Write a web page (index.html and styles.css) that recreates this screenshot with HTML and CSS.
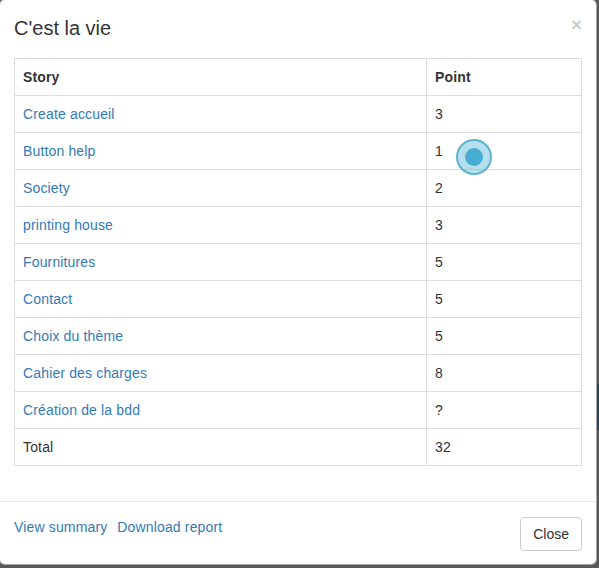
FILE: index.html
```html
<!DOCTYPE html>
<html lang="fr">
<head>
<meta charset="utf-8">
<title>C'est la vie</title>
<link rel="stylesheet" href="styles.css">
</head>
<body>
<div class="backdrop">
  <div class="band"></div>
</div>
<div class="modal">
  <div class="modal-header">
    <h4 class="modal-title">C'est la vie</h4>
    <button class="close" type="button" aria-label="Close">&times;</button>
  </div>
  <div class="modal-body">
    <table class="table">
      <thead>
        <tr><th class="col-story">Story</th><th class="col-point">Point</th></tr>
      </thead>
      <tbody>
        <tr><td><a href="#">Create accueil</a></td><td>3</td></tr>
        <tr><td><a href="#">Button help</a></td><td>1</td></tr>
        <tr><td><a href="#">Society</a></td><td>2</td></tr>
        <tr><td><a href="#">printing house</a></td><td>3</td></tr>
        <tr><td><a href="#">Fournitures</a></td><td>5</td></tr>
        <tr><td><a href="#">Contact</a></td><td>5</td></tr>
        <tr><td><a href="#">Choix du thème</a></td><td>5</td></tr>
        <tr><td><a href="#">Cahier des charges</a></td><td>8</td></tr>
        <tr><td><a href="#">Création de la bdd</a></td><td>?</td></tr>
        <tr><td>Total</td><td>32</td></tr>
      </tbody>
    </table>
  </div>
  <div class="modal-footer">
    <div class="links">
      <a href="#">View summary</a>
      <a href="#">Download report</a>
    </div>
    <button class="btn" type="button">Close</button>
  </div>
  <div class="click-marker"><span class="dot"></span></div>
</div>
</body>
</html>
```

FILE: styles.css
```css
html, body {
  margin: 0;
  padding: 0;
}

body {
  background: #5e5e5e;
  font-family: "Liberation Sans", Arial, Helvetica, sans-serif;
  font-size: 14px;
  line-height: 20px;
  color: #333;
  width: 599px;
  height: 568px;
  overflow: hidden;
  position: relative;
}

.backdrop {
  position: absolute;
  left: 0;
  top: 0;
  width: 599px;
  height: 568px;
  background: #595959;
}

.band {
  position: absolute;
  left: 0;
  top: 384px;
  width: 599px;
  height: 46px;
  background: #1f4752;
}

.modal {
  position: relative;
  margin: -1px 0 0 -1px;
  width: 596px;
  height: 564px;
  background: #fff;
  border: 1px solid rgba(0, 0, 0, 0.35);
  border-radius: 6px;
  display: flex;
  flex-direction: column;
}

.modal-header {
  display: flex;
  justify-content: space-between;
  align-items: flex-start;
  padding: 14px 14px 16px 14px;
}

.modal-title {
  margin: 0;
  font-size: 20px;
  font-weight: normal;
  line-height: 28px;
  color: #333;
}

.close {
  border: 0;
  background: transparent;
  padding: 0;
  margin-top: 1px;
  margin-right: 0;
  font-family: "Liberation Sans", Arial, sans-serif;
  font-size: 19px;
  font-weight: bold;
  line-height: 20px;
  color: #000;
  opacity: 0.2;
}

.modal-body {
  padding: 0 14px 15px 14px;
  letter-spacing: 0.15px;
}

.table {
  width: 568px;
  border-collapse: collapse;
  border: 1px solid #ddd;
  margin-bottom: 20px;
}

.table th,
.table td {
  border: 1px solid #ddd;
  padding: 8px;
  line-height: 20px;
  text-align: left;
  vertical-align: top;
}

.table th {
  font-weight: bold;
}

.col-point {
  width: 138px;
}

a {
  color: #337ab7;
  text-decoration: none;
}

.modal-footer {
  margin-top: auto;
  border-top: 1px solid #e5e5e5;
  padding: 15px 14px 14px 14px;
  display: flex;
  justify-content: space-between;
  align-items: flex-start;
}

.links {
  display: flex;
  gap: 10px;
  letter-spacing: 0.15px;
  line-height: 20px;
}

.btn {
  font-family: "Liberation Sans", Arial, sans-serif;
  font-size: 14px;
  line-height: 20px;
  color: #333;
  background: #fff;
  border: 1px solid #ccc;
  border-radius: 4px;
  padding: 6px 12px;
  height: 34px;
}

.click-marker {
  position: absolute;
  left: 456px;
  top: 139px;
  width: 32px;
  height: 32px;
  border-radius: 50%;
  background: rgba(91, 183, 214, 0.45);
  border: 2px solid #5bb4d2;
  display: flex;
  align-items: center;
  justify-content: center;
}

.click-marker .dot {
  width: 18px;
  height: 18px;
  border-radius: 50%;
  background: #47acd2;
}
```
